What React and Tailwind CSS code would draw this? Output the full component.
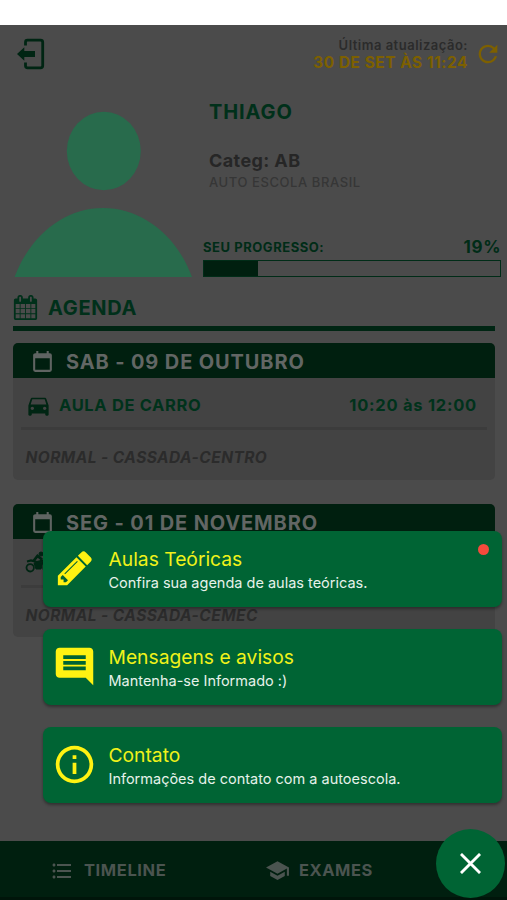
import React from 'react';
import { MdDirectionsCar, MdComment, MdInfoOutline, MdFormatListBulleted, MdSchool, MdRefresh } from 'react-icons/md';

const ExitIcon = () => (
  <svg className="w-7 h-8" viewBox="0 0 28 32" fill="none">
    <path d="M8.5 7.5V4.2Q8.5 2.2 10.5 2.2H23.5Q25.7 2.2 25.7 4.2V27.8Q25.7 29.8 23.5 29.8H10.5Q8.5 29.8 8.5 27.8V24.5" stroke="#002513" strokeWidth="2.8" />
    <path d="M0 16L7.3 9.3V13H18V19H7.3V22.7Z" fill="#002513" />
  </svg>
);

const CalendarGridIcon = () => (
  <svg className="w-[25px] h-[25px]" viewBox="0 0 1792 1792" fill="#00301a">
    <path d="M192 1664h288v-288h-288v288zm352 0h320v-288h-320v288zm-352-352h288v-320h-288v320zm352 0h320v-320h-320v320zm-352-384h288v-288h-288v288zm736 736h320v-288h-320v288zm-384-736h320v-288h-320v288zm768 736h288v-288h-288v288zm-384-352h320v-320h-320v320zm-352-864v-288q0-13-9.5-22.5t-22.5-9.5h-64q-13 0-22.5 9.5t-9.5 22.5v288q0 13 9.5 22.5t22.5 9.5h64q13 0 22.5-9.5t9.5-22.5zm736 864h288v-320h-288v320zm-384-384h320v-288h-320v288zm384 0h288v-288h-288v288zm32-480v-288q0-13-9.5-22.5t-22.5-9.5h-64q-13 0-22.5 9.5t-9.5 22.5v288q0 13 9.5 22.5t22.5 9.5h64q13 0 22.5-9.5t9.5-22.5zm384-64v1280q0 52-38 90t-90 38h-1408q-52 0-90-38t-38-90v-1280q0-52 38-90t90-38h128v-96q0-66 47-113t113-47h64q66 0 113 47t47 113v96h384v-96q0-66 47-113t113-47h64q66 0 113 47t47 113v96h128q52 0 90 38t38 90z" />
  </svg>
);

const CalendarIcon = () => (
  <svg className="w-[25px] h-[25px] mt-[3px]" viewBox="0 0 24 24" fill="#5f6462">
    <path d="M19 19H5V8h14M16 1v2H8V1H6v2H5c-1.11 0-2 .89-2 2v14a2 2 0 0 0 2 2h14a2 2 0 0 0 2-2V5a2 2 0 0 0-2-2h-1V1" />
  </svg>
);

const MotorbikeIcon = () => (
  <svg className="w-7 h-6 -ml-[1px] -mt-[3px]" viewBox="0 0 28 24" fill="none" stroke="#002513">
    <circle cx="5.2" cy="17.8" r="3.7" strokeWidth="1.8" />
    <circle cx="22" cy="17.8" r="3.7" strokeWidth="1.8" />
    <path d="M2 11.5L6 10.5L12 12L18 10.5L22 17" strokeWidth="2.2" />
    <path d="M9 13L18 12L16 19H11Z" fill="#002513" strokeWidth="1" />
    <path d="M8.5 11L12.5 6L17 9.5" strokeWidth="2.8" />
    <circle cx="16" cy="4" r="2" fill="#002513" />
  </svg>
);

const PencilIcon = () => (
  <svg className="w-10 h-10" viewBox="0 0 1792 1792" fill="#fff212">
    <path d="M491 1536l91-91-235-235-91 91v107h128v128h107zm523-928q0-22-22-22-10 0-17 7l-542 542q-7 7-7 17 0 22 22 22 10 0 17-7l542-542q7-7 7-17zm-54-192l416 416-832 832h-416v-416zm683 96q0 53-37 90l-166 166-416-416 166-165q36-38 90-38 53 0 91 38l235 234q37 39 37 91z" />
  </svg>
);

const lessons = [
  {
    date: 'SAB - 09 DE OUTUBRO',
    icon: <MdDirectionsCar className="w-[27px] h-[27px] -ml-[1px] text-[#002513]" />,
    name: 'AULA DE CARRO',
    time: '10:20 às 12:00',
    place: 'NORMAL - CASSADA-CENTRO',
    row: 'h-[49px] pt-[5px]',
    footer: 'h-[50px] pt-[6px]',
  },
  {
    date: 'SEG - 01 DE NOVEMBRO',
    icon: <MotorbikeIcon />,
    place: 'NORMAL - CASSADA-CEMEC',
    row: 'h-[46px] pt-[3px]',
    footer: 'h-[49px] pt-[6px]',
  },
];

const menu = [
  {
    icon: <PencilIcon />,
    title: 'Aulas Teóricas',
    text: 'Confira sua agenda de aulas teóricas.',
    badge: true,
  },
  {
    icon: <MdComment className="w-[45px] h-[45px] text-[#fff212]" />,
    title: 'Mensagens e avisos',
    text: 'Mantenha-se Informado :)',
  },
  {
    icon: <MdInfoOutline className="w-[45px] h-[45px] text-[#fff212]" />,
    title: 'Contato',
    text: 'Informações de contato com a autoescola.',
  },
];

const LessonCard = ({ lesson }) => (
  <div className="rounded-[5px] overflow-hidden bg-[#434343]">
    <div className="h-[35px] bg-[#001f0f] flex items-center pl-[17px]">
      <CalendarIcon />
      <span className="ml-[11px] pt-[2px] text-[20px] leading-6 font-bold tracking-[0.87px] text-[#626664]">{lesson.date}</span>
    </div>
    <div className={`${lesson.row} flex items-center pl-[13px] pr-[18px] text-[#00321b]`}>
      <span className="w-[33px] shrink-0">{lesson.icon}</span>
      {lesson.name && <span className="text-[16.5px] font-bold tracking-[0.65px]">{lesson.name}</span>}
      {lesson.time && <span className="ml-auto text-[16.5px] font-bold tracking-[0.75px]">{lesson.time}</span>}
    </div>
    <div className="mx-2 h-[3px] bg-[#3c3c3c]" />
    <div className={`${lesson.footer} flex items-center pl-[12.5px]`}>
      <span className="text-[15.5px] font-bold italic tracking-[0.45px] text-[#2b2b2b]">{lesson.place}</span>
    </div>
  </div>
);

const MenuItem = ({ item }) => (
  <div className="relative h-[76px] flex items-center rounded-lg bg-[#006434] shadow-[0_2px_3px_rgba(0,0,0,0.35)]">
    <div className="w-[66px] shrink-0 flex justify-center pr-[2px] pb-[2px]">{item.icon}</div>
    <div className="pt-[1px]">
      <p className="text-[19.25px] leading-[25px] text-[#f0f21a]">{item.title}</p>
      <p className="text-[14.5px] leading-[21px] text-[#e6f2ea]">{item.text}</p>
    </div>
    {item.badge && <span className="absolute right-[13px] top-[13px] w-[11px] h-[11px] rounded-full bg-[#f44a3c]" />}
  </div>
);

const App = () => {
  return (
    <div className="relative w-[507px] h-[900px] overflow-hidden flex flex-col bg-[#4b4b4b] font-['Inter','Liberation_Sans',sans-serif] whitespace-nowrap">
      <div className="h-[25px] shrink-0 bg-white" />

      <header className="h-[72px] shrink-0 flex justify-between pl-[17px] pr-[5px] pt-[13px]">
        <ExitIcon />
        <div className="flex">
          <div className="text-right">
            <p className="text-[13px] leading-[14px] font-semibold tracking-[0.5px] text-[#2b2b2b]">Última atualização:</p>
            <p className="text-[15.5px] leading-[21px] font-bold tracking-[0.5px] text-[#7d6000]">30 DE SET ÀS 11:24</p>
          </div>
          <MdRefresh className="w-7 h-7 ml-[6px] mt-[2px] text-[#7d6000]" />
        </div>
      </header>

      <section className="h-[190px] shrink-0 flex">
        <svg className="w-[203px] h-[181px] shrink-0" viewBox="0 0 203 181" fill="#286b4c">
          <ellipse cx="103.8" cy="54" rx="37" ry="39.2" />
          <path d="M14.5 180C31 137 65 111 103 111S176 137 192 180Z" />
        </svg>
        <div className="w-[298px] flex flex-col">
          <div className="pl-[6px] h-[138px]">
            <h1 className="pt-[3px] text-[20px] leading-6 font-bold tracking-[0.9px] text-[#00301a]">THIAGO</h1>
            <p className="mt-[25px] text-[18px] leading-6 font-bold tracking-[0.4px] text-[#262626]">Categ: AB</p>
            <p className="text-[13px] leading-[18px] font-medium tracking-[0.58px] text-[#363636]">AUTO ESCOLA BRASIL</p>
          </div>
          <div className="h-[25px] flex items-center justify-between text-[#002c17]">
            <span className="text-[13px] font-bold tracking-[0.55px]">SEU PROGRESSO:</span>
            <span className="text-[17px] font-bold tracking-[0.6px]">19%</span>
          </div>
          <div className="h-[17px] border border-[#002c17]">
            <div className="h-full bg-[#001f0f]" style={{ width: '18.4%' }} />
          </div>
        </div>
      </section>

      <main className="pl-[13px] pr-[12px] flex-1 min-h-0">
        <div className="h-[44px] pt-[2px] border-b-[5px] border-[#002513] flex items-center">
          <CalendarGridIcon />
          <h2 className="ml-[10px] text-[20px] font-bold tracking-[0.7px] text-[#00301a]">AGENDA</h2>
        </div>
        <div className="pt-[12px] flex flex-col gap-[24px]">
          {lessons.map((lesson) => (
            <LessonCard key={lesson.date} lesson={lesson} />
          ))}
        </div>
      </main>

      <nav className="h-[59px] shrink-0 flex items-center bg-[#001f0f] border-b-[3px] border-[#00150a] text-[#4b5450] pl-[50px] pt-[3px]">
        <div className="w-[215px] flex items-center">
          <MdFormatListBulleted className="w-6 h-6" />
          <span className="ml-[10px] text-[16.5px] font-bold tracking-[0.6px]">TIMELINE</span>
        </div>
        <div className="flex items-center">
          <MdSchool className="w-[25px] h-[25px]" />
          <span className="ml-[9px] text-[16.5px] font-bold tracking-[0.5px]">EXAMES</span>
        </div>
      </nav>

      <div className="absolute left-[42.5px] right-[5px] top-[531px] flex flex-col gap-[22px]">
        {menu.map((item) => (
          <MenuItem key={item.title} item={item} />
        ))}
      </div>

      <button className="absolute left-[436px] top-[829px] w-[69px] h-[69px] rounded-full bg-[#006434] flex items-center justify-center" aria-label="Fechar">
        <svg className="w-[21px] h-[21px] mr-[1px]" viewBox="0 0 22 22" stroke="#fff" strokeWidth="3">
          <path d="M1 1L21 21M21 1L1 21" />
        </svg>
      </button>
    </div>
  );
};

export default App;
